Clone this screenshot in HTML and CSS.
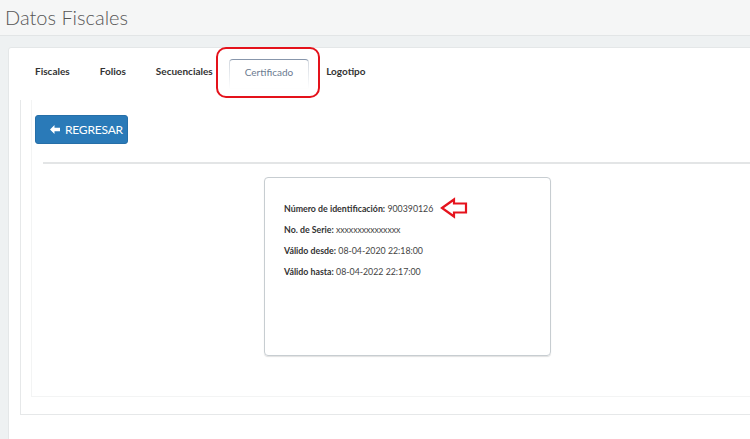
FILE: index.html
```html
<!DOCTYPE html>
<html lang="es">
<head>
<meta charset="utf-8">
<title>Datos Fiscales</title>
<link rel="stylesheet" href="styles.css">
</head>
<body>
<header class="page-header">
  <h1 class="page-title">Datos Fiscales</h1>
</header>
<main class="main">
  <section class="panel">
    <ul class="tabs">
      <li class="tab"><a>Fiscales</a></li>
      <li class="tab"><a>Folios</a></li>
      <li class="tab"><a>Secuenciales</a></li>
      <li class="tab active"><a>Certificado</a><span class="highlight"></span></li>
      <li class="tab"><a>Logotipo</a></li>
    </ul>
    <div class="tab-content">
      <div class="inner">
        <button class="btn-back" type="button">
          <svg class="btn-icon" viewBox="0 0 10 9" width="10" height="9" aria-hidden="true"><path d="M0 4.5 L4.5 0 L4.5 2.8 L10 2.8 L10 6.2 L4.5 6.2 L4.5 9 Z" fill="#fff"/></svg>
          REGRESAR
        </button>
        <hr class="divider">
        <div class="card">
          <p><b>Número de identificación:</b> 900390126<svg class="mark" viewBox="0 0 30 22" width="30" height="22" aria-hidden="true"><path d="M2 11 L14 2.5 L14 6.5 L26 6.5 L26 15.5 L14 15.5 L14 19.5 Z" fill="none" stroke="#e5131d" stroke-width="2.2" stroke-linejoin="miter"/></svg></p>
          <p><b>No. de Serie:</b> <span class="serial">xxxxxxxxxxxxxxx</span></p>
          <p><b>Válido desde:</b> 08-04-2020 22:18:00</p>
          <p><b>Válido hasta:</b> 08-04-2022 22:17:00</p>
        </div>
      </div>
    </div>
  </section>
</main>
</body>
</html>
```
FILE: styles.css
```css
* { box-sizing: border-box; }
html, body { margin: 0; padding: 0; }
body {
  background: #eef1f2;
  font-family: Lato, "Open Sans", sans-serif;
  color: #333;
  overflow: hidden;
  height: 439px;
}
.page-header {
  background: #f5f6f6;
  height: 36px;
  border-bottom: 1px solid #e2e5e6;
  padding: 0 0 0 5px;
}
.page-title {
  margin: 0;
  font-size: 20px;
  font-weight: 300;
  line-height: 35px;
  color: #555;
}
.main {
  padding: 11px 0 0 8px;
  height: 403px;
  overflow: hidden;
}
.panel {
  background: #fff;
  border: 1px solid #e4e7e8;
  border-radius: 3px 0 0 0;
  margin-right: -40px;
  padding: 11px 0 0 11px;
  height: 420px;
}
.tabs {
  list-style: none;
  margin: 0;
  padding: 0;
  display: flex;
  height: 41px;
}
.tab {
  position: relative;
  height: 41px;
}
.tab a {
  display: block;
  padding: 5px 15px 0;
  font-size: 10px;
  font-weight: 700;
  line-height: 14px;
  color: #333;
}
.tab.active {
  margin-left: 1px;
  margin-right: 2px;
  height: 30px;
  border: 1px solid transparent;
  border-radius: 4px 4px 0 0;
  background: linear-gradient(#fff, #fff) padding-box,
              linear-gradient(#8796ab 0, #8796ab 1px, #d3d9e0 2px, rgba(255,255,255,0) 100%) border-box;
}
.tab.active a {
  padding: 5px 15px 0;
  font-weight: 400;
  color: #6b7a90;
}
.highlight {
  position: absolute;
  left: -14px;
  top: -13px;
  width: 104px;
  height: 51px;
  border: 2.5px solid #e4121b;
  border-radius: 10px;
}
.tab-content {
  border-left: 1px solid #e6e8e9;
  border-bottom: 1px solid #e6e8e9;
  padding: 0 0 17px 10px;
}
.inner {
  border: 1px solid #f3f4f4;
  border-top: none;
  padding: 15px 0 40px 3px;
}
.btn-back {
  display: flex;
  align-items: center;
  gap: 5px;
  height: 29px;
  width: 93px;
  padding: 0 0 0 14px;
  background: #2a7ab8;
  border: 1px solid #266fa8;
  border-radius: 3px;
  color: #fff;
  font-family: Lato, "Open Sans", sans-serif;
  font-size: 12px;
  letter-spacing: -0.2px;
}
.btn-icon { display: block; }
.divider {
  border: 0;
  height: 2px;
  background: #e3e5e6;
  margin: 18px 0 13px 8px;
}
.card {
  margin-left: 229px;
  width: 287px;
  height: 179px;
  border: 1px solid #c7cdd1;
  border-radius: 4px;
  box-shadow: 0 1px 1px rgba(0, 0, 0, 0.12);
  padding: 20px 0 0 19px;
}
.card p {
  margin: 0;
  font-size: 8.8px;
  line-height: 21px;
  color: #444;
  white-space: nowrap;
}
.card b { color: #333; }
.serial { letter-spacing: -0.1px; }
.mark {
  vertical-align: middle;
  margin-left: 7px;
  margin-top: -3px;
}
```
